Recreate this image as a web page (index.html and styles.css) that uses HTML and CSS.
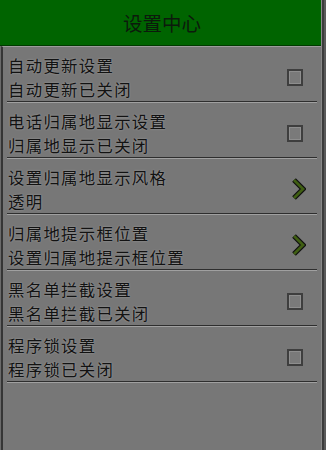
FILE: index.html
```html
<!DOCTYPE html>
<html lang="zh">
<head>
<meta charset="utf-8">
<link rel="stylesheet" href="styles.css">
</head>
<body>
<div class="screen">
  <div class="app">
    <div class="header">设置中心</div>
    <div class="panel">
      <div class="row">
        <div class="texts"><div>自动更新设置</div><div>自动更新已关闭</div></div>
        <span class="check"></span>
      </div>
      <div class="row">
        <div class="texts"><div>电话归属地显示设置</div><div>归属地显示已关闭</div></div>
        <span class="check"></span>
      </div>
      <div class="row">
        <div class="texts"><div>设置归属地显示风格</div><div>透明</div></div>
        <svg class="chev" width="15" height="24" viewBox="0 0 15 24"><polyline points="3,3 12,12 3,21" fill="none" stroke="#101010" stroke-width="5.2" stroke-linejoin="miter"/><polyline points="3,3 12,12 3,21" fill="none" stroke="#3f5e12" stroke-width="2.8" stroke-linejoin="miter"/></svg>
      </div>
      <div class="row">
        <div class="texts"><div>归属地提示框位置</div><div>设置归属地提示框位置</div></div>
        <svg class="chev" width="15" height="24" viewBox="0 0 15 24"><polyline points="3,3 12,12 3,21" fill="none" stroke="#101010" stroke-width="5.2" stroke-linejoin="miter"/><polyline points="3,3 12,12 3,21" fill="none" stroke="#3f5e12" stroke-width="2.8" stroke-linejoin="miter"/></svg>
      </div>
      <div class="row">
        <div class="texts"><div>黑名单拦截设置</div><div>黑名单拦截已关闭</div></div>
        <span class="check"></span>
      </div>
      <div class="row">
        <div class="texts"><div>程序锁设置</div><div>程序锁已关闭</div></div>
        <span class="check"></span>
      </div>
    </div>
  </div>
  <div class="edge"></div>
</div>
</body>
</html>
```
FILE: styles.css
```css
html, body {
  margin: 0;
  padding: 0;
  width: 326px;
  height: 450px;
  overflow: hidden;
  background: #4a4a4a;
  font-family: "Noto Sans CJK SC", "Noto Sans", sans-serif;
}
.screen {
  display: flex;
  height: 450px;
}
.app {
  width: 321px;
  display: flex;
  flex-direction: column;
}
.edge {
  flex: 1;
  background: linear-gradient(to right, #8a8a8a 0, #8a8a8a 1px, #3c3c3c 1px, #3c3c3c 3px, #5a5a5a 3px);
}
.header {
  height: 45px;
  background: #006400;
  border-bottom: 1px solid #003a00;
  color: #0c1a0c;
  font-size: 19.5px;
  line-height: 45px;
  text-align: center;
  padding-left: 3px;
}
.panel {
  flex: 1;
  margin-left: 1px;
  border-left: 2px solid #353535;
  border-top: 1px solid #9c9c9c;
  background: #777777;
  padding: 0 4px 0 4px;
  box-shadow: -1px 0 0 #6a6a6a;
}
.row {
  display: flex;
  align-items: center;
  justify-content: space-between;
  padding: 6px 0 0 1px;
  border-bottom: 1px solid #2e2e2e;
  box-shadow: 0 1px 0 #a0a0a0;
  margin-bottom: 1px;
}
.texts {
  font-size: 16.4px;
  letter-spacing: 1.3px;
  line-height: 24px;
  color: #121212;
  text-shadow: 0 0 2px rgba(255, 255, 255, 0.35);
  white-space: nowrap;
}
.check {
  width: 12px;
  height: 13px;
  border: 2px solid #3e3e3e;
  box-shadow: inset 0 0 0 1px #8e8e8e;
  background: #7a7a7a;
  margin-right: 14px;
}
.chev {
  margin-right: 11px;
  display: block;
}
```
